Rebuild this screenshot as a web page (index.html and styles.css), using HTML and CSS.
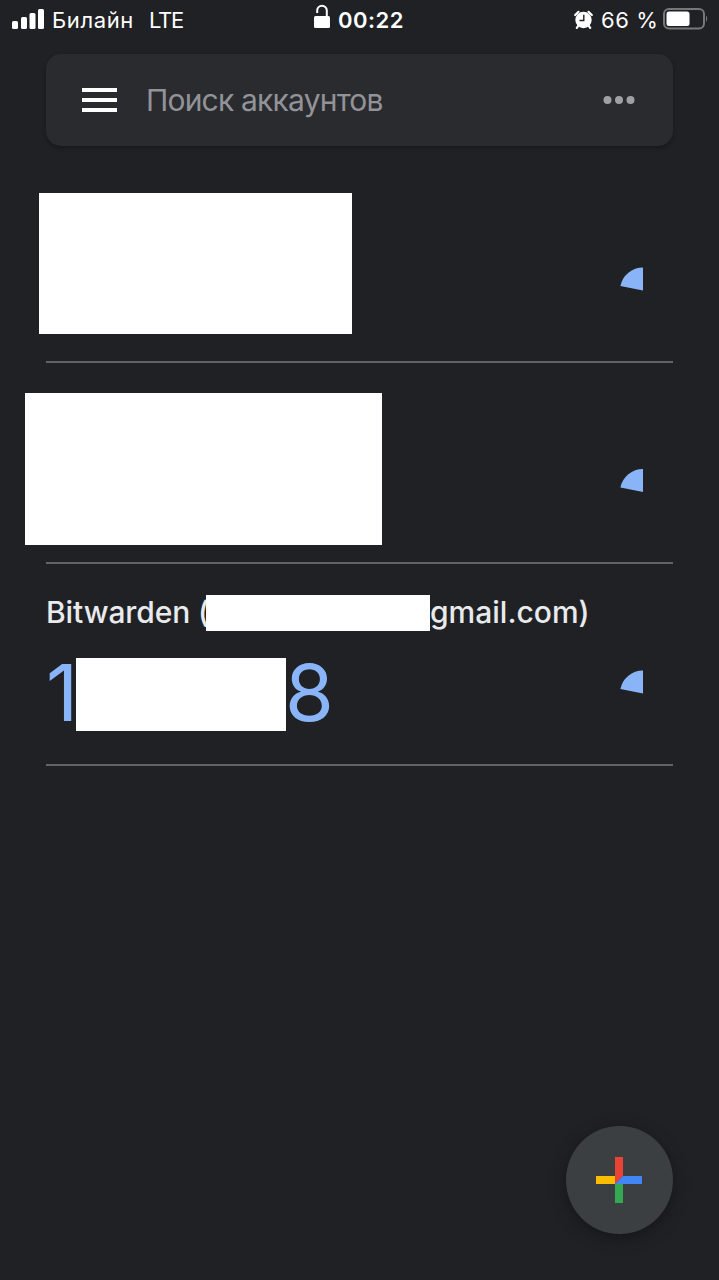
FILE: index.html
```html
<!DOCTYPE html>
<html lang="ru">
<head>
<meta charset="utf-8">
<title>Authenticator</title>
<link rel="stylesheet" href="styles.css">
</head>
<body>
<div class="screen">
  <header class="status">
    <div class="status-left">
      <svg class="signal" width="32" height="22" viewBox="0 0 32 22" fill="#fff"><rect x="0" y="13" width="6" height="8" rx="1.5"/><rect x="9" y="9" width="6" height="12" rx="1.5"/><rect x="17.500" y="5" width="6" height="16" rx="1.500"/><rect x="26" y="1" width="6" height="20" rx="1.500"/></svg>
      <span class="carrier">Билайн</span>
      <span class="network">LTE</span>
    </div>
    <div class="status-center">
      <svg class="lock" width="17" height="25" viewBox="0 0 17 25"><rect x="0" y="12" width="16" height="12" rx="1.500" fill="#fff"/><path d="M3.200 9V6.500a4.800 4.800 0 0 1 9.600 0V13" fill="none" stroke="#fff" stroke-width="2"/></svg>
      <span class="clock">00:22</span>
    </div>
    <div class="status-right">
      <svg width="19" height="20" viewBox="0 0 19 20"><circle cx="9.500" cy="10" r="8.200" fill="#fff"/><path d="M1.200 5L4.500 1.800M17.800 5L14.500 1.800M4.500 15.500L2.800 17.800M14.500 15.500l1.700 2.300" stroke="#fff" stroke-width="2.200" stroke-linecap="round"/><path d="M9.800 4.800v5.700H5.500" fill="none" stroke="#202125" stroke-width="1.400"/></svg>
      <span class="percent">66 %</span>
      <svg class="battery" width="46" height="22" viewBox="0 0 46 22"><rect x="1" y="1" width="40" height="19.500" rx="5" fill="none" stroke="#77787c" stroke-width="2"/><rect x="3.500" y="3.500" width="23" height="14.500" rx="2.500" fill="#fff"/><path d="M43 7.500q2.500 3.200 0 6.500z" fill="#77787c"/></svg>
    </div>
  </header>

  <div class="search">
    <svg width="35" height="24" viewBox="0 0 35 24" fill="#fff"><rect y="0" width="35" height="4"/><rect y="10" width="35" height="4"/><rect y="20" width="35" height="4"/></svg>
    <span class="placeholder">Поиск аккаунтов</span>
    <svg class="more" width="32" height="8" viewBox="0 0 32 8" fill="#9fa0a4"><circle cx="4.500" cy="4" r="4"/><circle cx="16" cy="4" r="4"/><circle cx="27.500" cy="4" r="4"/></svg>
  </div>

  <main class="accounts">
    <section class="account first">
      <div class="cover cover-first"></div>
      <svg class="timer" width="46" height="46" viewBox="0 0 46 46"><path d="M23 23.500V.5A23 23 0 0 0 .4 19z" fill="#8ab4f8"/></svg>
    </section>
    <section class="account second">
      <div class="cover cover-second"></div>
      <svg class="timer" width="46" height="46" viewBox="0 0 46 46"><path d="M23 23V0A23 23 0 0 0 .4 18.500z" fill="#8ab4f8"/></svg>
    </section>
    <section class="account third">
      <div class="details">
        <div class="name"><span class="issuer">Bitwarden (</span><span class="cover cover-name"></span><span class="domain">gmail.com)</span></div>
        <div class="code"><span class="digit-first">1</span><span class="cover cover-code"></span><span class="digit-last">8</span></div>
      </div>
      <svg class="timer" width="46" height="46" viewBox="0 0 46 46"><path d="M23 23.500V.5A23 23 0 0 0 .4 19z" fill="#8ab4f8"/></svg>
    </section>
  </main>

  <div class="add">
    <svg width="46" height="46" viewBox="0 0 46 46"><path d="M19 0h8v19l-8 8z" fill="#ea4335"/><path d="M0 19h19v8H0z" fill="#fbbc04"/><path d="M19 27h8v19h-8z" fill="#34a853"/><path d="M27 19h19v8H19z" fill="#4285f4"/></svg>
  </div>
</div>
</body>
</html>
```
FILE: styles.css
```css
* { box-sizing: border-box; }
body {
  margin: 0;
  background: #202125;
  color: #e8eaed;
  font-family: Inter, "Liberation Sans", sans-serif;
}
svg { display: block; flex: none; }
.screen {
  display: flex;
  flex-direction: column;
  height: 1280px;
  overflow: hidden;
}
.status {
  display: grid;
  grid-template-columns: 1fr auto 1fr;
  align-items: center;
  height: 40px;
  padding: 0 10px 0 12px;
  color: #fff;
  font-size: 22px;
  line-height: 40px;
  white-space: nowrap;
}
.status-left, .status-center, .status-right { display: flex; align-items: center; }
.status-center { margin-right: 3px; }
.status-right { justify-content: flex-end; }
.signal { margin-top: -3px; }
.carrier { width: 82px; margin-left: 8px; letter-spacing: 0.6px; }
.network { margin-left: 15px; letter-spacing: -1.3px; }
.lock { margin-top: -8px; }
.clock { margin-left: 7px; font-weight: 600; letter-spacing: 0.5px; }
.percent { width: 57px; margin: 0 5px 0 8px; letter-spacing: 0.6px; }
.battery { margin-top: -2px; }
.search {
  display: flex;
  align-items: center;
  height: 92px;
  margin: 14px 46px 0;
  padding: 0 38px 0 36px;
  border-radius: 15px;
  background: #2a2b2f;
  box-shadow: 0 2px 4px rgba(0, 0, 0, 0.3);
}
.placeholder {
  margin-left: 29px;
  color: #929398;
  font-size: 30px;
  letter-spacing: -0.8px;
  white-space: nowrap;
}
.more { margin-left: auto; }
.accounts { margin: 15px 46px 0; }
.account {
  display: flex;
  align-items: flex-start;
  height: 202px;
  border-bottom: 2px solid #626366;
}
.second { height: 201px; }
.cover { flex: none; background: #fff; }
.cover-first { width: 313px; height: 141px; margin: 32px 0 0 -7px; }
.cover-second { width: 357px; height: 152px; margin: 30px 0 0 -21px; }
.timer { margin: 106px 7px 0 auto; }
.name, .code { display: flex; align-items: center; white-space: nowrap; }
.name { margin-top: 31px; height: 36px; font-size: 30px; font-weight: 500; line-height: 34px; }
.issuer { width: 160px; letter-spacing: -0.1px; }
.cover-name { width: 224px; height: 36px; }
.domain { letter-spacing: 0; }
.issuer, .domain { margin-top: -2px; }
.code { height: 73px; margin-top: 27px; color: #8ab4f8; font-size: 79px; line-height: 73px; }
.digit-first { width: 30px; letter-spacing: -8px; }
.cover-code { width: 210px; height: 73px; }
.digit-last { margin-left: -1px; }
.digit-first, .digit-last { margin-top: -5px; }
.add {
  display: flex;
  align-items: center;
  justify-content: center;
  width: 107px;
  height: 108px;
  margin: auto 46px 46px auto;
  padding-right: 1px;
  border-radius: 50%;
  background: #3c3f42;
  box-shadow: 0 4px 16px rgba(0, 0, 0, 0.35);
}
```
